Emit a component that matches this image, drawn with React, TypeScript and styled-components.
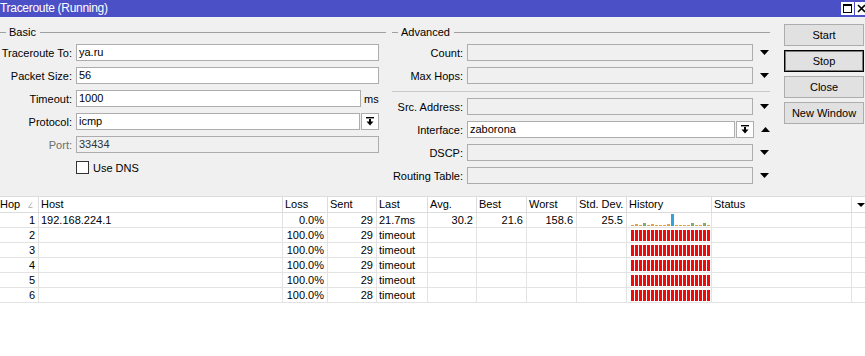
import React from 'react';
import styled, { createGlobalStyle } from 'styled-components';

const GlobalStyle = createGlobalStyle`
  html, body {
    margin: 0;
    padding: 0;
  }
  body {
    background: #ffffff;
    font-family: "Liberation Sans", Arial, sans-serif;
    font-size: 11px;
    color: #000;
  }
  * {
    box-sizing: border-box;
  }
`;

const Window = styled.div`
  width: 865px;
  height: 356px;
  overflow: hidden;
  display: flex;
  flex-direction: column;
  background: #f0f0f0;
`;

const TitleBar = styled.div`
  height: 17px;
  flex-shrink: 0;
  background: #4b50c6;
  color: #fff;
  display: flex;
  justify-content: space-between;
`;

const TitleText = styled.span`
  font-size: 12px;
  line-height: 17px;
  letter-spacing: -0.3px;
`;

const TitleButtons = styled.div`
  display: flex;
  gap: 1px;
  margin-top: 2px;
  margin-right: -3px;
`;

const TitleButton = styled.div`
  width: 13px;
  height: 13px;
  background: #fff;
  display: flex;
  align-items: center;
  justify-content: center;
`;

const FormArea = styled.div`
  height: 179px;
  flex-shrink: 0;
  display: flex;
  align-items: flex-start;
`;

const Group = styled.div<{ $width: number; $gap?: number }>`
  width: ${p => p.$width}px;
  margin-left: ${p => p.$gap ?? 0}px;
  margin-top: 9px;
  display: flex;
  flex-direction: column;
`;

const Legend = styled.div`
  height: 12px;
  display: flex;
  align-items: center;
  gap: 3px;
  margin-bottom: 6px;
  line-height: 12px;
  &::before {
    content: '';
    width: 6px;
    height: 1px;
    background: #a0a0a0;
  }
  &::after {
    content: '';
    flex: 1;
    height: 1px;
    margin-left: 1px;
    background: #a0a0a0;
  }
`;

const Row = styled.div`
  height: 17px;
  display: flex;
  align-items: center;
  & + & {
    margin-top: 6px;
  }
`;

const Label = styled.span<{ $width: number; $disabled?: boolean }>`
  width: ${p => p.$width}px;
  flex-shrink: 0;
  text-align: right;
  padding-right: 4px;
  white-space: nowrap;
  color: ${p => (p.$disabled ? '#6d6d6d' : '#000')};
`;

const Field = styled.div<{ $width: number; $disabled?: boolean }>`
  width: ${p => p.$width}px;
  height: 17px;
  flex-shrink: 0;
  border: 1px solid #adadad;
  background: ${p => (p.$disabled ? '#f0f0f0' : '#fff')};
  color: ${p => (p.$disabled ? '#333' : '#000')};
  padding: 0 2px;
  line-height: 15px;
  white-space: nowrap;
  overflow: hidden;
`;

const Unit = styled.span`
  margin-left: 3px;
`;

const DropButton = styled.div`
  width: 18px;
  height: 17px;
  margin-left: 1px;
  border: 1px solid #adadad;
  background: #fff;
  display: flex;
  align-items: center;
  justify-content: center;
`;

const ArrowSlot = styled.div`
  margin-left: 7px;
  display: flex;
  align-items: center;
`;

const Separator = styled.div`
  height: 1px;
  background: #c8c8c8;
  margin: 7px 0 6px;
`;

const CheckRow = styled(Row)`
  padding-left: 76px;
`;

const CheckBox = styled.span`
  width: 13px;
  height: 13px;
  border: 1px solid #333;
  background: #fff;
`;

const CheckLabel = styled.span`
  margin-left: 4px;
`;

const ButtonColumn = styled.div`
  width: 80px;
  margin-left: 14px;
  margin-top: 7px;
  display: flex;
  flex-direction: column;
  gap: 4px;
`;

const Button = styled.div<{ $focused?: boolean }>`
  height: 22px;
  border: 1px solid ${p => (p.$focused ? '#000' : '#adadad')};
  box-shadow: ${p => (p.$focused ? 'inset 0 0 0 1px rgba(0,0,0,0.45)' : 'none')};
  background: #e1e1e1;
  display: flex;
  align-items: center;
  justify-content: center;
  font-size: 11px;
`;

const TableArea = styled.div`
  flex: 1;
  background: #fff;
`;

const COLUMNS = '39px 244px 45px 49px 51px 49px 50px 50px 50px 85px 140px 13px';

const HeaderRow = styled.div`
  display: grid;
  grid-template-columns: ${COLUMNS};
  height: 17px;
  border-top: 1px solid #dcdcdc;
  border-bottom: 1px solid #dcdcdc;
`;

const HeaderCell = styled.div`
  border-right: 1px solid #dcdcdc;
  padding-left: 2px;
  line-height: 15px;
  white-space: nowrap;
  overflow: hidden;
  position: relative;
  &:last-child {
    border-right: none;
  }
`;

const HopTitle = styled.span`
  margin-left: -2px;
`;

const SortMark = styled.svg`
  position: absolute;
  left: 28px;
  top: 5px;
`;

const ColumnMenu = styled.svg`
  position: absolute;
  left: 5px;
  top: 6px;
`;

const DataRow = styled.div`
  display: grid;
  grid-template-columns: ${COLUMNS};
  height: 15px;
  border-bottom: 1px solid #e3e3e3;
`;

const Cell = styled.div<{ $align?: 'left' | 'right' }>`
  border-right: 1px solid #e3e3e3;
  text-align: ${p => p.$align ?? 'left'};
  padding: ${p => (p.$align === 'right' ? '0 3px 0 0' : '0 0 0 2px')};
  line-height: 14px;
  white-space: nowrap;
  overflow: hidden;
  &:last-child {
    border-right: none;
  }
`;

const HistoryCell = styled.div<{ $timeout: boolean }>`
  border-right: 1px solid #e3e3e3;
  padding-left: 4px;
  display: flex;
  gap: 1px;
  align-items: ${p => (p.$timeout ? 'flex-start' : 'flex-end')};
  padding-top: ${p => (p.$timeout ? 2 : 0)}px;
  padding-bottom: ${p => (p.$timeout ? 0 : 1)}px;
`;

const Bar = styled.span<{ $color: string; $height: number }>`
  width: 3px;
  height: ${p => p.$height}px;
  background: ${p => p.$color};
  flex-shrink: 0;
`;

const DownArrow = () => (
  <svg width="9" height="5" viewBox="0 0 9 5">
    <polygon points="0,0 9,0 4.5,5" fill="#000" />
  </svg>
);

const UpArrow = () => (
  <svg width="9" height="5" viewBox="0 0 9 5">
    <polygon points="0,5 9,5 4.5,0" fill="#000" />
  </svg>
);

const DropIcon = () => (
  <svg width="8" height="9" viewBox="0 0 8 9">
    <rect x="0" y="0" width="8" height="1.4" fill="#000" />
    <rect x="3" y="2" width="2" height="3" fill="#000" />
    <polygon points="0.5,4.5 7.5,4.5 4,8.5" fill="#000" />
  </svg>
);

type Hop = {
  hop: number;
  host?: string;
  loss: string;
  sent: string;
  last: string;
  avg?: string;
  best?: string;
  worst?: string;
  std?: string;
  timeout: boolean;
};

const hops: Hop[] = [
  { hop: 1, host: '192.168.224.1', loss: '0.0%', sent: '29', last: '21.7ms', avg: '30.2', best: '21.6', worst: '158.6', std: '25.5', timeout: false },
  { hop: 2, loss: '100.0%', sent: '29', last: 'timeout', timeout: true },
  { hop: 3, loss: '100.0%', sent: '29', last: 'timeout', timeout: true },
  { hop: 4, loss: '100.0%', sent: '29', last: 'timeout', timeout: true },
  { hop: 5, loss: '100.0%', sent: '29', last: 'timeout', timeout: true },
  { hop: 6, loss: '100.0%', sent: '28', last: 'timeout', timeout: true },
];

const ORANGE = '#e8a43c';
const GREEN = '#7eae6c';
const BLUE = '#35a2dc';
const RED = '#f20a0a';

const replyBars: Record<number, [string, number]> = {
  1: [ORANGE, 2],
  3: [GREEN, 3],
  5: [ORANGE, 2],
  9: [ORANGE, 2],
  10: [BLUE, 12],
  15: [GREEN, 3],
  18: [GREEN, 3],
};

const History = ({ timeout }: { timeout: boolean }) => (
  <HistoryCell $timeout={timeout}>
    {Array.from({ length: 20 }, (_, i) => {
      if (timeout) return <Bar key={i} $color={RED} $height={11} />;
      const [color, height] = replyBars[i] ?? [ORANGE, 1];
      return <Bar key={i} $color={color} $height={height} />;
    })}
  </HistoryCell>
);

const headers = ['Host', 'Loss', 'Sent', 'Last', 'Avg.', 'Best', 'Worst', 'Std. Dev.', 'History', 'Status'];

export default function App() {
  return (
    <>
      <GlobalStyle />
      <Window>
        <TitleBar>
          <TitleText>Traceroute (Running)</TitleText>
          <TitleButtons>
            <TitleButton>
              <svg width="9" height="9" viewBox="0 0 9 9">
                <rect x="0.5" y="0.5" width="8" height="8" fill="none" stroke="#000" />
                <rect x="0.5" y="0.5" width="8" height="1.5" fill="#000" />
              </svg>
            </TitleButton>
            <TitleButton>
              <svg width="9" height="9" viewBox="0 0 9 9">
                <path d="M1 1 L8 8 M8 1 L1 8" stroke="#000" strokeWidth="1.6" />
              </svg>
            </TitleButton>
          </TitleButtons>
        </TitleBar>

        <FormArea>
          <Group $width={386}>
            <Legend>Basic</Legend>
            <Row>
              <Label $width={76}>Traceroute To:</Label>
              <Field $width={303}>ya.ru</Field>
            </Row>
            <Row>
              <Label $width={76}>Packet Size:</Label>
              <Field $width={303}>56</Field>
            </Row>
            <Row>
              <Label $width={76}>Timeout:</Label>
              <Field $width={285}>1000</Field>
              <Unit>ms</Unit>
            </Row>
            <Row>
              <Label $width={76}>Protocol:</Label>
              <Field $width={284}>icmp</Field>
              <DropButton>
                <DropIcon />
              </DropButton>
            </Row>
            <Row>
              <Label $width={76} $disabled>Port:</Label>
              <Field $width={303} $disabled>33434</Field>
            </Row>
            <CheckRow>
              <CheckBox />
              <CheckLabel>Use DNS</CheckLabel>
            </CheckRow>
          </Group>

          <Group $width={378} $gap={6}>
            <Legend>Advanced</Legend>
            <Row>
              <Label $width={75}>Count:</Label>
              <Field $width={286} $disabled />
              <ArrowSlot><DownArrow /></ArrowSlot>
            </Row>
            <Row>
              <Label $width={75}>Max Hops:</Label>
              <Field $width={286} $disabled />
              <ArrowSlot><DownArrow /></ArrowSlot>
            </Row>
            <Separator />
            <Row>
              <Label $width={75}>Src. Address:</Label>
              <Field $width={286} $disabled />
              <ArrowSlot><DownArrow /></ArrowSlot>
            </Row>
            <Row>
              <Label $width={75}>Interface:</Label>
              <Field $width={268}>zaborona</Field>
              <DropButton>
                <DropIcon />
              </DropButton>
              <ArrowSlot><UpArrow /></ArrowSlot>
            </Row>
            <Row>
              <Label $width={75}>DSCP:</Label>
              <Field $width={286} $disabled />
              <ArrowSlot><DownArrow /></ArrowSlot>
            </Row>
            <Row>
              <Label $width={75}>Routing Table:</Label>
              <Field $width={286} $disabled />
              <ArrowSlot><DownArrow /></ArrowSlot>
            </Row>
          </Group>

          <ButtonColumn>
            <Button>Start</Button>
            <Button $focused>Stop</Button>
            <Button>Close</Button>
            <Button>New Window</Button>
          </ButtonColumn>
        </FormArea>

        <TableArea>
          <HeaderRow>
            <HeaderCell>
              <HopTitle>Hop</HopTitle>
              <SortMark width="5" height="6" viewBox="0 0 5 6">
                <path d="M0.5 5.5 L4 0.5 M0.5 5.5 L4.5 5.5" stroke="#b8b8b8" strokeWidth="1" fill="none" />
              </SortMark>
            </HeaderCell>
            {headers.map(h => (
              <HeaderCell key={h}>{h}</HeaderCell>
            ))}
            <HeaderCell>
              <ColumnMenu width="8" height="4" viewBox="0 0 8 4">
                <polygon points="0,0 8,0 4,4" fill="#000" />
              </ColumnMenu>
            </HeaderCell>
          </HeaderRow>
          {hops.map(r => (
            <DataRow key={r.hop}>
              <Cell $align="right">{r.hop}</Cell>
              <Cell>{r.host}</Cell>
              <Cell $align="right">{r.loss}</Cell>
              <Cell $align="right">{r.sent}</Cell>
              <Cell>{r.last}</Cell>
              <Cell $align="right">{r.avg}</Cell>
              <Cell $align="right">{r.best}</Cell>
              <Cell $align="right">{r.worst}</Cell>
              <Cell $align="right">{r.std}</Cell>
              <History timeout={r.timeout} />
              <Cell />
              <Cell />
            </DataRow>
          ))}
        </TableArea>
      </Window>
    </>
  );
}
